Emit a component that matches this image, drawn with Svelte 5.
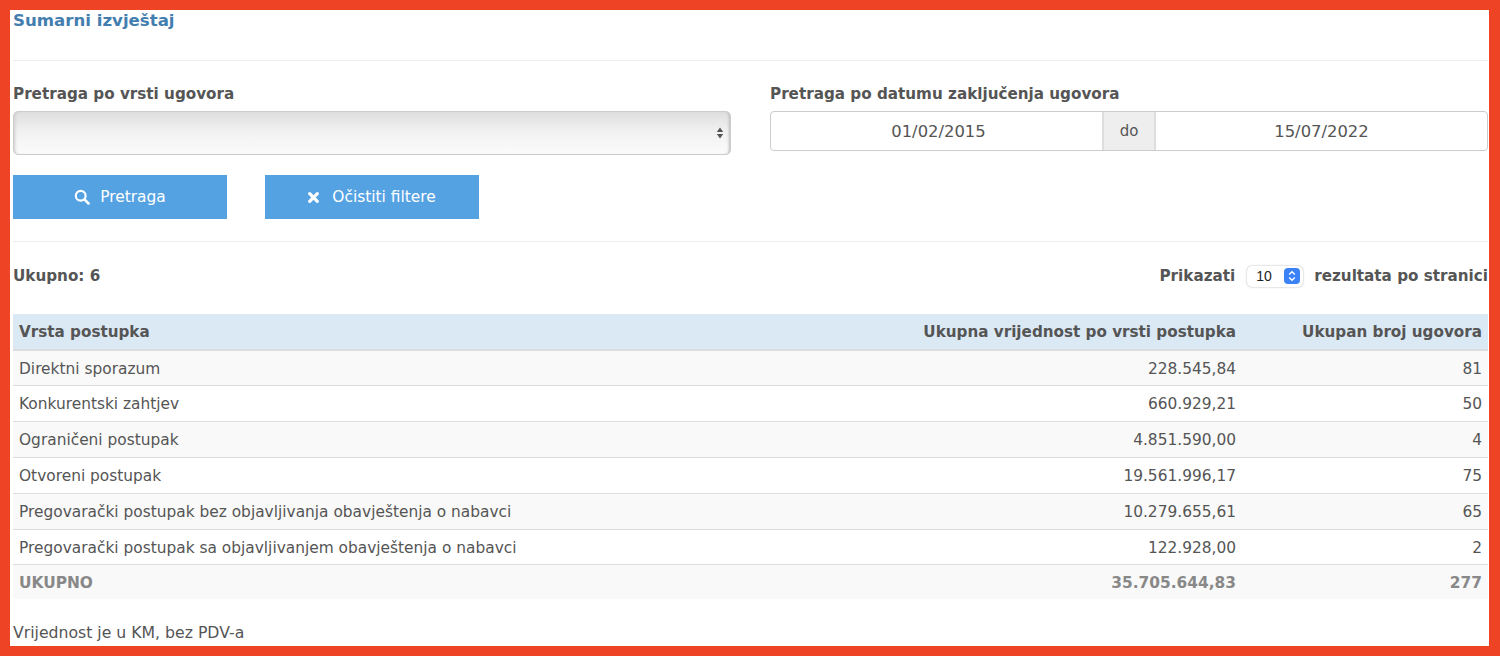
<script lang="ts">
  type Row = { name: string; value: string; count: string };

  const rows: Row[] = [
    { name: "Direktni sporazum", value: "228.545,84", count: "81" },
    { name: "Konkurentski zahtjev", value: "660.929,21", count: "50" },
    { name: "Ograničeni postupak", value: "4.851.590,00", count: "4" },
    { name: "Otvoreni postupak", value: "19.561.996,17", count: "75" },
    { name: "Pregovarački postupak bez objavljivanja obavještenja o nabavci", value: "10.279.655,61", count: "65" },
    { name: "Pregovarački postupak sa objavljivanjem obavještenja o nabavci", value: "122.928,00", count: "2" }
  ];
</script>

<div class="page">
  <h1>Sumarni izvještaj</h1>
  <hr class="rule-top" />

  <div class="filters">
    <div class="field">
      <div class="label">Pretraga po vrsti ugovora</div>
      <div class="select">
        <svg width="8" height="14" viewBox="0 0 8 14"><path d="M4 1.5 7.2 6H.8zM4 12.5.8 8h6.4z" fill="#555" /></svg>
      </div>
    </div>
    <div class="field">
      <div class="label">Pretraga po datumu zaključenja ugovora</div>
      <div class="dates">
        <div class="date from">01/02/2015</div>
        <div class="addon">do</div>
        <div class="date">15/07/2022</div>
      </div>
    </div>
  </div>

  <div class="buttons">
    <div class="btn">
      <svg width="16" height="16" viewBox="0 0 15 15" fill="none" stroke="#fff">
        <circle cx="6.3" cy="6.3" r="4.6" stroke-width="2" />
        <path d="M9.8 9.8 13.6 13.6" stroke-width="2.4" stroke-linecap="round" />
      </svg>
      <span>Pretraga</span>
    </div>
    <div class="btn wide-gap">
      <svg width="11" height="11" viewBox="0 0 11 11" fill="none" stroke="#fff">
        <path d="M1.7 1.7 9.3 9.3M9.3 1.7 1.7 9.3" stroke-width="3.2" stroke-linecap="round" />
      </svg>
      <span>Očistiti filtere</span>
    </div>
  </div>
  <hr class="rule-mid" />

  <div class="summary">
    <b>Ukupno: 6</b>
    <div class="per-page">
      <b>Prikazati</b>
      <div class="mini-select">
        <span>10</span>
        <i>
          <svg width="8" height="12" viewBox="0 0 8 12" fill="none" stroke="#fff" stroke-width="1.4">
            <path d="M1.2 4.4 4 1.8 6.8 4.4M1.2 7.6 4 10.2 6.8 7.6" />
          </svg>
        </i>
      </div>
      <b>rezultata po stranici</b>
    </div>
  </div>

  <table>
    <thead>
      <tr>
        <th class="left">Vrsta postupka</th>
        <th>Ukupna vrijednost po vrsti postupka</th>
        <th>Ukupan broj ugovora</th>
      </tr>
    </thead>
    <tbody>
      {#each rows as row}
        <tr>
          <td class="left">{row.name}</td>
          <td>{row.value}</td>
          <td>{row.count}</td>
        </tr>
      {/each}
    </tbody>
    <tfoot>
      <tr>
        <td class="left">UKUPNO</td>
        <td>35.705.644,83</td>
        <td>277</td>
      </tr>
    </tfoot>
  </table>

  <p class="note">Vrijednost je u KM, bez PDV-a</p>
</div>

<style>
  :global(body) {
    margin: 0;
  }
  .page {
    box-sizing: border-box;
    width: 1500px;
    height: 656px;
    overflow: hidden;
    background: #fff;
    border: 10px solid #ee4324;
    border-right-width: 11px;
    padding: 0 1px 0 3px;
    font-family: "DejaVu Sans", Verdana, sans-serif;
    font-size: 15.4px;
    color: #555;
  }
  h1 {
    margin: 0;
    font-size: 16.6px;
    line-height: 22px;
    font-weight: 700;
    color: #437eaf;
  }
  hr {
    border: 0;
    height: 1px;
    background: #eee;
    margin: 0;
  }
  b {
    font-size: 15.2px;
  }
  .rule-top {
    margin-top: 28px;
  }
  .rule-mid {
    margin-top: 22px;
  }
  .filters {
    display: grid;
    grid-template-columns: 718px 718px;
    justify-content: space-between;
    margin-top: 23px;
  }
  .label {
    font-weight: 700;
    font-size: 15.2px;
    line-height: 20px;
    margin-bottom: 7px;
  }
  .select {
    box-sizing: border-box;
    height: 44px;
    display: flex;
    align-items: center;
    justify-content: flex-end;
    padding-right: 6px;
    border: 1px solid #ccc;
    border-radius: 5px;
    background: linear-gradient(#dedede, #f1f1f1 45%, #fbfbfb);
    box-shadow: inset 3px 0 3px -2px #ccc, inset -3px 0 3px -2px #bbb;
  }
  .dates {
    box-sizing: border-box;
    display: flex;
    height: 40px;
    border: 1px solid #ccc;
    border-radius: 4px;
    text-align: center;
    line-height: 39px;
  }
  .date {
    flex: 1;
    font-size: 16.4px;
  }
  .from {
    text-indent: 4px;
  }
  .addon {
    width: 50px;
    background: #eee;
    border-left: 2px solid #ddd;
    border-right: 2px solid #ddd;
    font-size: 15px;
  }
  .buttons {
    display: flex;
    gap: 38px;
    margin-top: 20px;
  }
  .btn {
    width: 214px;
    height: 44px;
    display: flex;
    align-items: center;
    justify-content: center;
    gap: 10px;
    background: #55a2e3;
    color: #fff;
  }
  .wide-gap {
    gap: 13px;
  }
  .summary {
    display: flex;
    justify-content: space-between;
    align-items: center;
    height: 20px;
    margin-top: 24px;
  }
  .per-page {
    display: flex;
    align-items: center;
    gap: 12px;
  }
  .mini-select {
    box-sizing: border-box;
    width: 56px;
    height: 21px;
    margin-right: -1px;
    display: flex;
    align-items: center;
    justify-content: space-between;
    padding: 0 3px 0 9px;
    border-radius: 5px;
    background: #fff;
    box-shadow: 0 0 2px rgba(0, 0, 0, 0.35);
    color: #222;
    font-family: "Liberation Sans", Arial, sans-serif;
    font-size: 14px;
  }
  .mini-select i {
    width: 16px;
    height: 16px;
    border-radius: 4px;
    background: #3b82f6;
    display: flex;
    align-items: center;
    justify-content: center;
  }
  table {
    width: 100%;
    margin-top: 28px;
    border-collapse: collapse;
    table-layout: fixed;
  }
  th, td {
    box-sizing: border-box;
    padding: 0 6px;
    text-align: right;
    white-space: nowrap;
  }
  th:nth-child(1) {
    width: 640px;
  }
  th:nth-child(3) {
    width: 246px;
  }
  th {
    height: 36px;
    background: #dbe9f5;
    border-bottom: 2px solid #ddd;
    font-weight: 700;
    font-size: 15.2px;
  }
  td {
    height: 36px;
    padding-top: 2px;
    border-top: 1px solid #ddd;
  }
  tbody tr:nth-child(odd) td,
  tfoot td {
    background: #f9f9f9;
  }
  tbody tr:first-child td {
    height: 35px;
    padding-top: 3px;
    border-top: 0;
  }
  tbody tr:last-child td {
    height: 35px;
  }
  tfoot td {
    height: 35px;
    font-weight: 700;
    color: #888;
  }
  .left {
    text-align: left;
  }
  .note {
    margin: 24px 0 0;
    line-height: 20px;
    font-size: 15.7px;
  }
</style>
